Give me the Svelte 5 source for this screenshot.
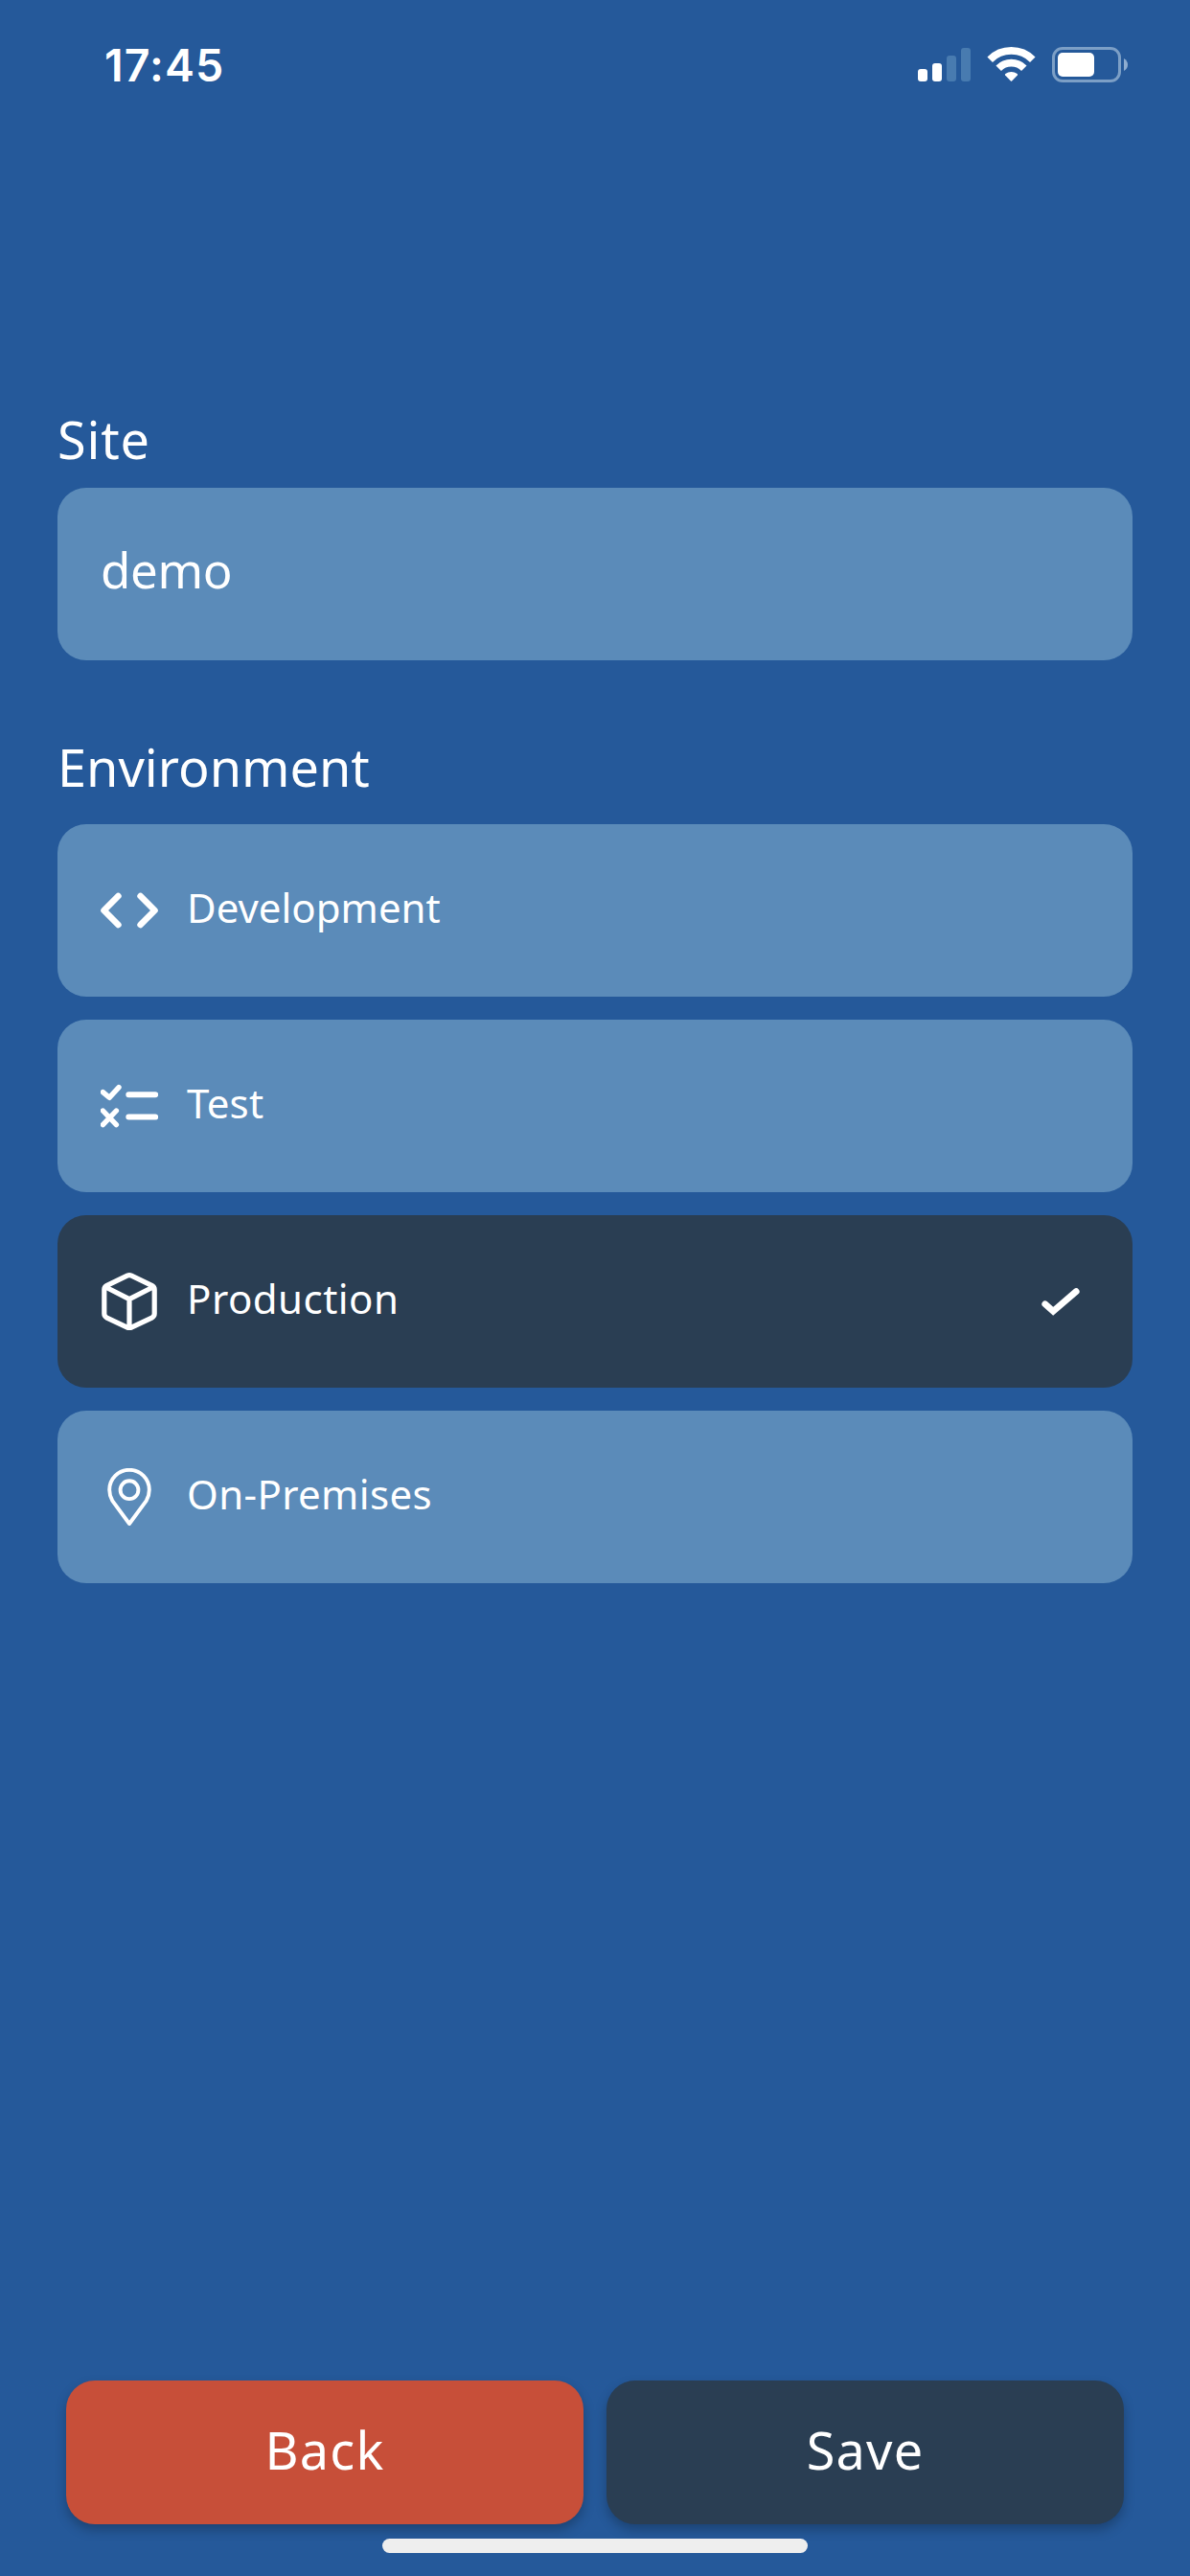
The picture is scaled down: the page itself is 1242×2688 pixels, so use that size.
<script>
  let site = $state('demo');
  let selected = $state('production');

  const environments = [
    { id: 'development', label: 'Development' },
    { id: 'test', label: 'Test' },
    { id: 'production', label: 'Production' },
    { id: 'on-premises', label: 'On-Premises' }
  ];
</script>

<div class="screen">
  <header class="status">
    <span class="time">17:45</span>
    <svg class="signals" width="219" height="37" viewBox="0 0 219 37" fill="#fff">
      <rect x="0" y="23" width="10" height="13" rx="3" />
      <rect x="15" y="17" width="10" height="19" rx="3" />
      <rect x="30" y="9" width="10" height="27" rx="3" fill="#487bb0" />
      <rect x="45" y="1" width="10" height="35" rx="3" fill="#487bb0" />
      <g transform="translate(97.5 35.5)">
        <path d="M-22.3-22.3A31.5 31.5 0 0 1 22.3-22.3M-13.3-13.3A18.8 18.8 0 0 1 13.3-13.3" fill="none" stroke="#fff" stroke-width="7.8" />
        <path d="M-6.4-6.1Q-7-6.8-6.2-7.4A10.4 10.4 0 0 1 6.2-7.4Q7-6.8 6.4-6.1L.6 0Q0 .6-.6 0Z" />
      </g>
      <rect x="141.5" y="1.5" width="69" height="34" rx="9.5" fill="none" stroke="#7c9fc6" stroke-width="3" />
      <rect x="146" y="6" width="38" height="25" rx="5" />
      <path d="M215 12Q219 14.5 219 18.5T215 25Z" fill="#8fadd0" />
    </svg>
  </header>

  <main>
    <label class="heading" for="site">Site</label>
    <input id="site" class="field" bind:value={site} />

    <h2 class="heading">Environment</h2>
    <div class="options">
      {#each environments as env (env.id)}
        <button class="option {env.id}" class:active={selected === env.id} onclick={() => (selected = env.id)}>
          <svg class="icon" viewBox="0 0 60 60">
            {#if env.id === 'development'}
              <path d="M18.4 15L3.5 30l14.9 15M41.6 15l14.9 15-14.9 15" stroke-width="6.6" />
            {:else if env.id === 'test'}
              <path d="M2.4 15.6l6.7 5.7L19 10.6M2.4 35l14 14.6M16.4 35L2.4 49.6" stroke-width="5.4" />
              <path d="M29.3 18.2H57.2M29.3 41.6H57.2" stroke-width="6" />
            {:else if env.id === 'production'}
              <path d="M27.8 3.2Q30 2.2 32.2 3.2L53.4 13.3Q56.2 14.8 56.2 17.6V42.8Q56.2 45.6 53.4 47.1L32.2 57.2Q30 58.2 27.8 57.2L6.6 47.1Q3.8 45.6 3.8 42.8V17.6Q3.8 14.8 6.6 13.3ZM5.2 15L30 27.6 54.8 15M30 27.6V57" stroke-width="5.2" />
            {:else}
              <path d="M30 58L12.2 33.8Q9.2 28.6 9.2 22.6A20.8 20.8 0 0 1 50.8 22.6Q50.8 28.6 47.8 33.8Z" stroke-width="3.9" />
              <circle cx="30" cy="22.7" r="9.4" stroke-width="3.9" />
            {/if}
          </svg>
          <span class="name">{env.label}</span>
          {#if selected === env.id}
            <svg class="icon" viewBox="0 0 60 60">
              <path class="check" d="M13.8 32.8l8.4 7.5L46.2 19.7" stroke-width="6.8" />
            </svg>
          {/if}
        </button>
      {/each}
    </div>
  </main>

  <footer class="actions">
    <button class="action back">Back</button>
    <button class="action save">Save</button>
  </footer>
  <div class="home"></div>
</div>

<style>
  :global(body) {
    background: #25599a;
  }
  .screen {
    box-sizing: border-box;
    width: 1242px;
    height: 2688px;
    display: flex;
    flex-direction: column;
    background: #25599a;
    color: #fff;
    font-family: 'Noto Sans', 'Open Sans', sans-serif;
  }
  .status {
    height: 423px;
    box-sizing: border-box;
    padding: 38px 65px 0 109px;
    display: flex;
    align-items: flex-start;
    justify-content: space-between;
  }
  .time {
    font: 600 46.5px/60px Inter, sans-serif;
    letter-spacing: 1.1px;
  }
  .signals {
    margin-top: 11px;
  }
  main {
    flex: 1;
    padding: 0 60px;
  }
  .heading {
    display: block;
    margin: 0;
    font-size: 54px;
    line-height: 70px;
    font-weight: 400;
  }
  label.heading {
    letter-spacing: 0.8px;
  }
  .field {
    display: block;
    box-sizing: border-box;
    width: 100%;
    height: 180px;
    margin: 16px 0 76px;
    padding: 0 45px 10px;
    border: 0;
    border-radius: 30px;
    outline: 0;
    background: #5b8bb9;
    color: inherit;
    font: inherit;
    font-size: 51px;
    letter-spacing: -0.35px;
  }
  .options {
    display: flex;
    flex-direction: column;
    gap: 24px;
    margin-top: 24.5px;
  }
  .option {
    display: flex;
    align-items: center;
    gap: 30px;
    height: 180px;
    padding: 0 45px;
    border: 0;
    border-radius: 30px;
    background: #5b8bb9;
    color: inherit;
    font: inherit;
    font-size: 42px;
    text-align: left;
  }
  .option.active {
    background: #2a3e53;
  }
  .name {
    flex: 1;
    padding-bottom: 6px;
  }
  .test .name {
    letter-spacing: 0.25px;
  }
  .production .name {
    letter-spacing: 0.48px;
  }
  .on-premises .name {
    letter-spacing: 0.37px;
  }
  .icon {
    width: 60px;
    height: 60px;
    fill: none;
    stroke: #fff;
    stroke-linecap: round;
    stroke-linejoin: round;
  }
  .check {
    stroke-linejoin: miter;
  }
  .actions {
    display: flex;
    gap: 24px;
    padding: 0 69px;
  }
  .action {
    flex: 1;
    height: 150px;
    padding: 0 0 6px;
    border: 0;
    border-radius: 30px;
    color: inherit;
    font: inherit;
    font-size: 54px;
    letter-spacing: 1.2px;
    box-shadow: 0 6px 12px rgba(0, 0, 0, 0.25);
  }
  .back {
    background: #c74f39;
  }
  .save {
    background: #2a3e53;
  }
  .home {
    width: 444px;
    height: 15px;
    margin: 15px auto 24px;
    border-radius: 8px;
    background: #eee;
  }
</style>
